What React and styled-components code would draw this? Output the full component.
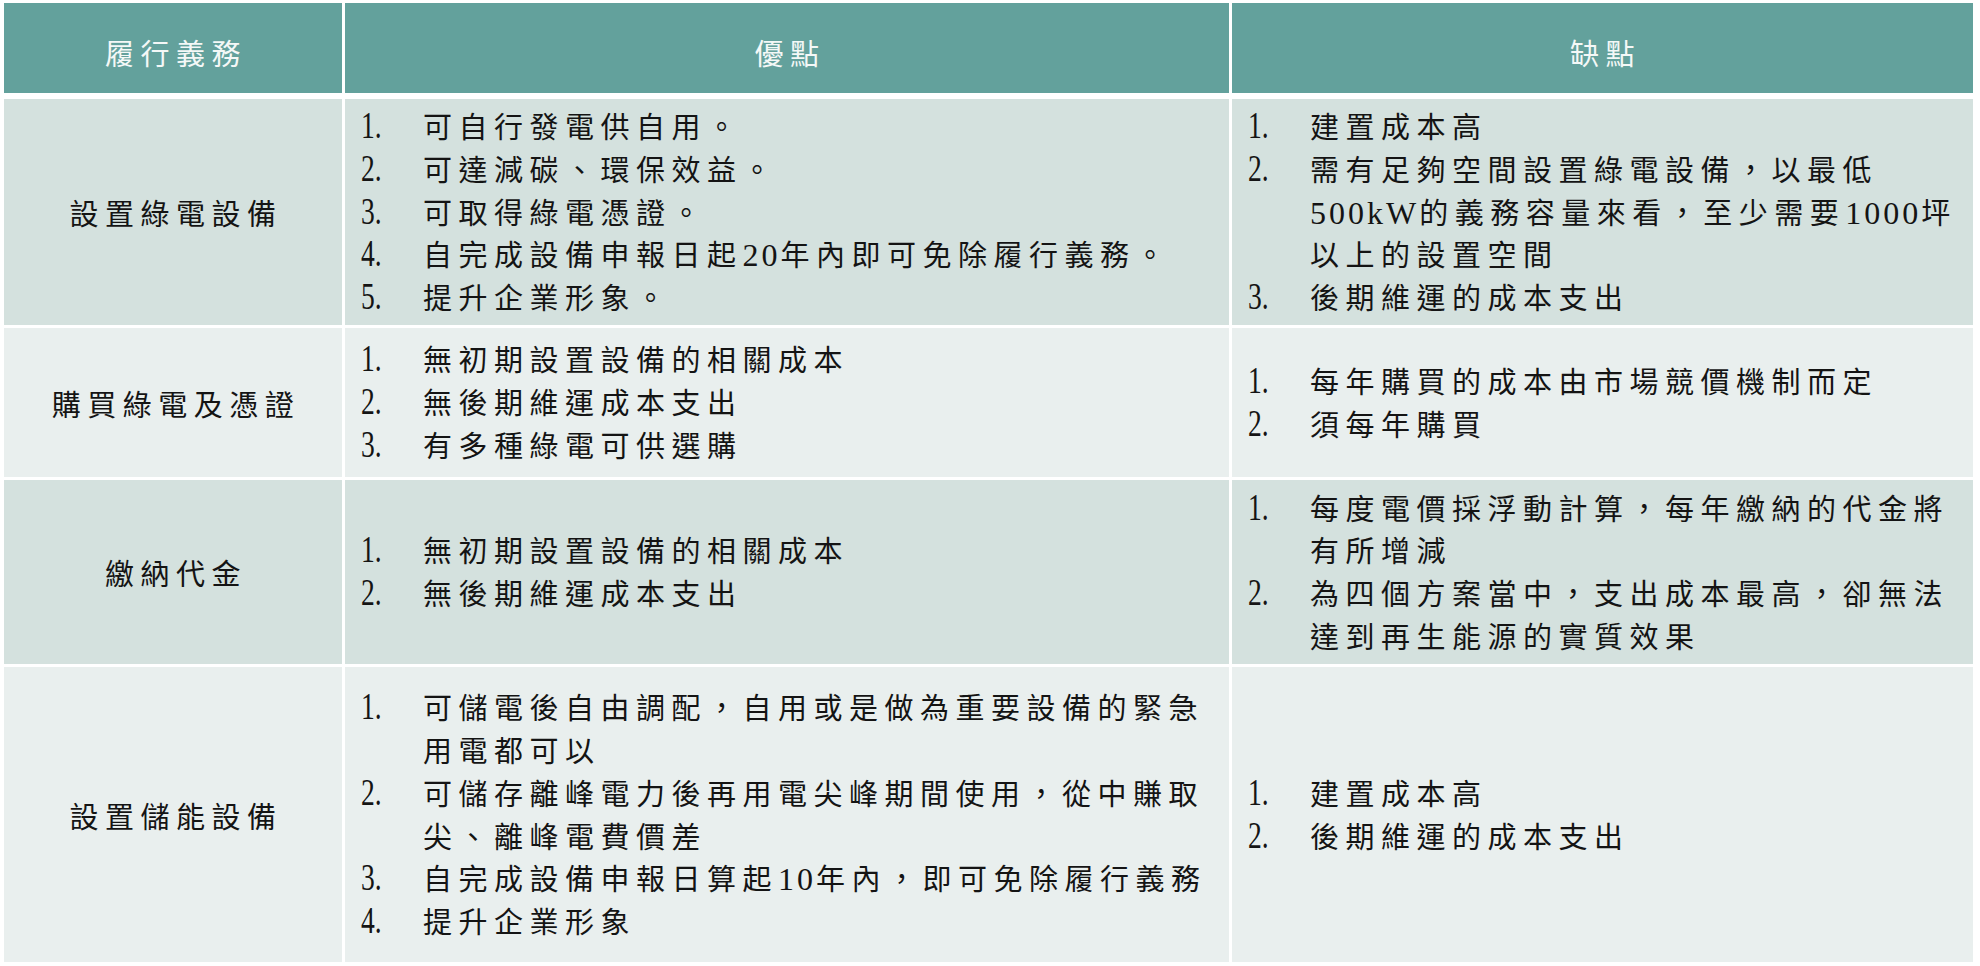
import styled, { createGlobalStyle } from "styled-components";

const GlobalStyle = createGlobalStyle`
  html, body {
    margin: 0;
    padding: 0;
    background: #ffffff;
  }
  body {
    font-family: "Liberation Serif", "Noto Sans CJK TC", serif;
    color: #141414;
  }
`;

const rows = [
  {
    title: "設置綠電設備",
    height: 226,
    tone: "dark",
    pros: [
      ["可自行發電供自用。"],
      ["可達減碳、環保效益。"],
      ["可取得綠電憑證。"],
      ["自完成設備申報日起", { n: "20" }, "年內即可免除履行義務。"],
      ["提升企業形象。"],
    ],
    cons: [
      ["建置成本高"],
      [
        "需有足夠空間設置綠電設備，以最低",
        { n: "500kW" },
        "的義務容量來看，至少需要",
        { n: "1000" },
        "坪以上的設置空間",
      ],
      ["後期維運的成本支出"],
    ],
  },
  {
    title: "購買綠電及憑證",
    height: 149,
    tone: "light",
    pros: [
      ["無初期設置設備的相關成本"],
      ["無後期維運成本支出"],
      ["有多種綠電可供選購"],
    ],
    cons: [["每年購買的成本由市場競價機制而定"], ["須每年購買"]],
  },
  {
    title: "繳納代金",
    height: 184,
    tone: "dark",
    pros: [["無初期設置設備的相關成本"], ["無後期維運成本支出"]],
    cons: [
      ["每度電價採浮動計算，每年繳納的代金將有所增減"],
      ["為四個方案當中，支出成本最高，卻無法達到再生能源的實質效果"],
    ],
  },
  {
    title: "設置儲能設備",
    height: 295,
    tone: "light",
    pros: [
      ["可儲電後自由調配，自用或是做為重要設備的緊急用電都可以"],
      ["可儲存離峰電力後再用電尖峰期間使用，從中賺取尖、離峰電費價差"],
      ["自完成設備申報日算起", { n: "10" }, "年內，即可免除履行義務"],
      ["提升企業形象"],
    ],
    cons: [["建置成本高"], ["後期維運的成本支出"]],
  },
];

const App = () => {
  return (
    <>
      <GlobalStyle />
      <Page>
        <Table>
          <HeaderRow>
            <HeaderCell>履行義務</HeaderCell>
            <HeaderCell>優點</HeaderCell>
            <HeaderCell>缺點</HeaderCell>
          </HeaderRow>
          {rows.map((row, i) => (
            <BodyRow key={i} $height={row.height}>
              <TitleCell $tone={row.tone}>{row.title}</TitleCell>
              <ListCell $tone={row.tone}>
                <List items={row.pros} width={795} />
              </ListCell>
              <ListCell $tone={row.tone}>
                <List items={row.cons} width={658} />
              </ListCell>
            </BodyRow>
          ))}
        </Table>
      </Page>
    </>
  );
};

const List = ({ items, width }) => (
  <ItemList>
    {items.map((parts, i) => (
      <Item key={i}>
        <Marker>
          <MarkerText>{i + 1}.</MarkerText>
        </Marker>
        <ItemText $width={width}>
          {parts.map((p, j) =>
            typeof p === "string" ? p : <Num key={j}>{p.n}</Num>
          )}
        </ItemText>
      </Item>
    ))}
  </ItemList>
);

export default App;

const Page = styled.div`
  padding: 3px 7px 0 4px;
`;

const Table = styled.div`
  display: flex;
  flex-direction: column;
  gap: 3px;
  width: 1969px;
`;

const HeaderRow = styled.div`
  display: grid;
  grid-template-columns: 338px 884px 741px;
  column-gap: 3px;
  height: 90px;
  margin-bottom: 3px;
`;

const BodyRow = styled.div`
  display: grid;
  grid-template-columns: 338px 884px 741px;
  column-gap: 3px;
  height: ${(p) => p.$height}px;
`;

const HeaderCell = styled.div`
  background: #63a19c;
  color: #f4f8f7;
  display: flex;
  align-items: center;
  justify-content: center;
  font-family: "Noto Sans CJK TC", sans-serif;
  font-size: 29px;
  letter-spacing: 6.5px;
  padding-left: 6px;
  padding-top: 8px;
`;

const TitleCell = styled.div`
  background: ${(p) => (p.$tone === "dark" ? "#d4e1de" : "#e9efee")};
  display: flex;
  align-items: center;
  justify-content: center;
  font-family: "Noto Sans CJK TC", sans-serif;
  font-size: 29px;
  letter-spacing: 6.5px;
  padding-left: 6px;
`;

const ListCell = styled.div`
  background: ${(p) => (p.$tone === "dark" ? "#d4e1de" : "#e9efee")};
  display: flex;
  align-items: center;
  padding: 0 0 0 16px;
`;

const ItemList = styled.div`
  display: flex;
  flex-direction: column;
  padding-top: 4px;
`;

const Item = styled.div`
  display: flex;
  align-items: baseline;
`;

const Marker = styled.div`
  width: 62px;
  flex-shrink: 0;
  font-family: "Liberation Serif", serif;
  font-size: 29px;
  line-height: 42.7px;
`;

const MarkerText = styled.span`
  display: inline-block;
  transform: scale(0.95, 1.28);
  transform-origin: 0 71%;
`;

const ItemText = styled.div`
  width: ${(p) => p.$width}px;
  font-family: "Liberation Serif", "Noto Sans CJK TC", serif;
  font-size: 29px;
  line-height: 42.7px;
  letter-spacing: 6.5px;
`;

const Num = styled.span`
  font-size: 32px;
  line-height: 1;
  letter-spacing: 3px;
`;
